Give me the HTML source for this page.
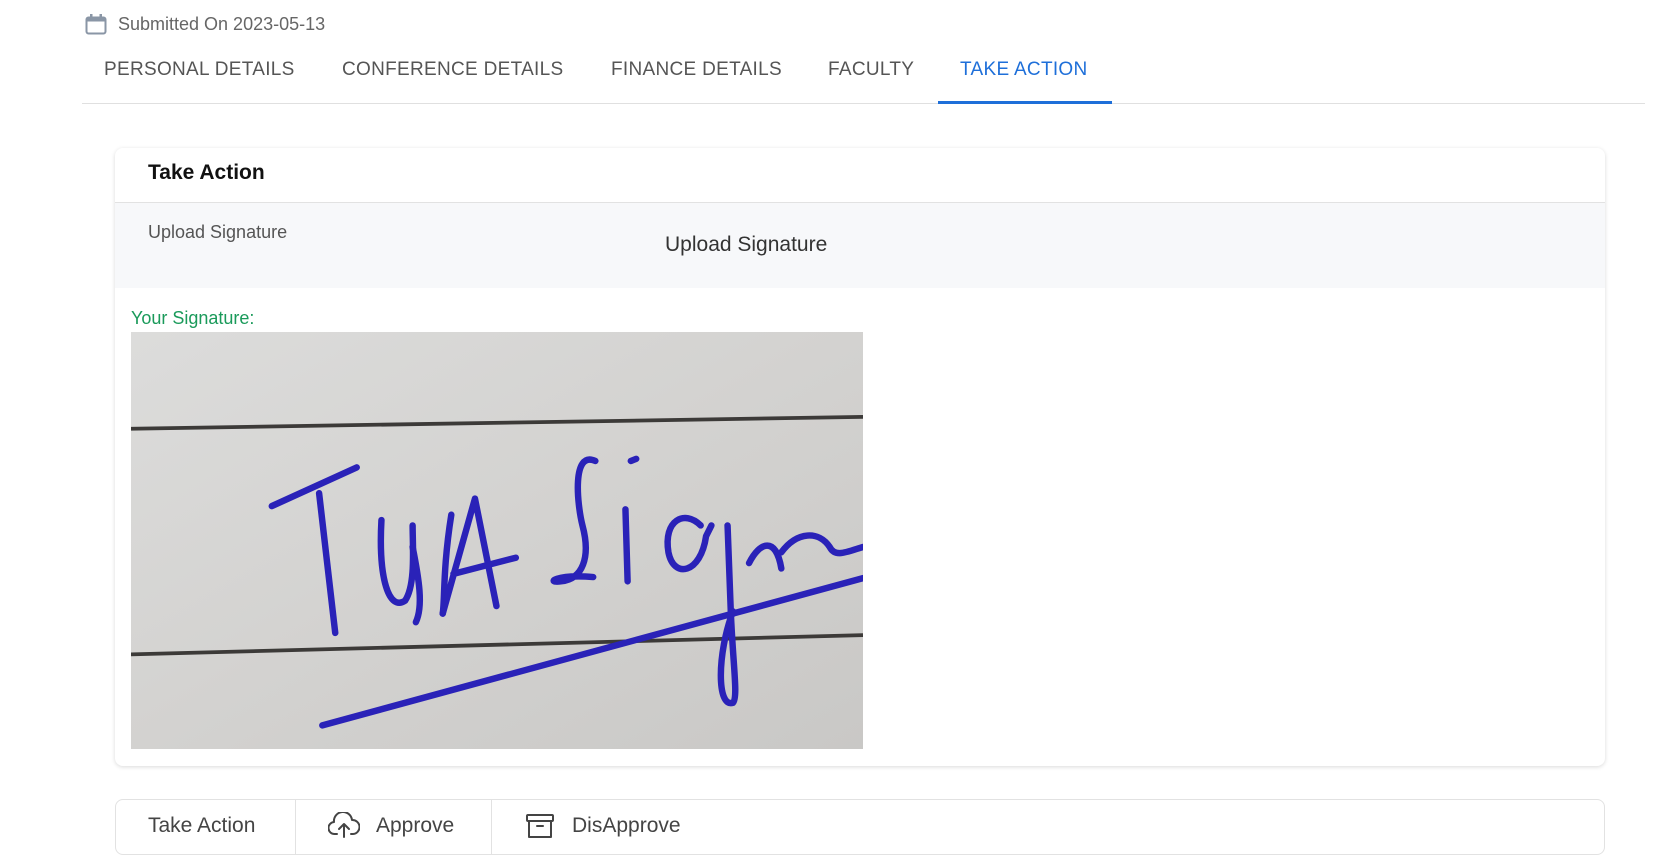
<!DOCTYPE html>
<html><head><meta charset="utf-8"><style>
*{box-sizing:border-box;margin:0;padding:0}
body{width:1678px;height:865px;background:#fff;font-family:"Liberation Sans",sans-serif;position:relative;overflow:hidden;color:#555}
.abs{position:absolute;white-space:nowrap}
.tab{position:absolute;top:59px;font-size:19px;color:#555;letter-spacing:.3px}
</style></head><body>
<svg class="abs" style="left:85px;top:14px" width="22" height="21" viewBox="0 0 22 21"><rect x="1.5" y="3.5" width="19" height="16" rx="2" fill="none" stroke="#8a96a6" stroke-width="2"/><rect x="1.5" y="3.5" width="19" height="4" fill="#8a96a6"/><rect x="5" y="0" width="2.5" height="5" fill="#8a96a6"/><rect x="14.5" y="0" width="2.5" height="5" fill="#8a96a6"/></svg>
<div class="abs" style="left:118px;top:14px;font-size:18px;color:#666">Submitted On 2023-05-13</div>
<div class="tab" style="left:104px">PERSONAL DETAILS</div>
<div class="tab" style="left:342px">CONFERENCE DETAILS</div>
<div class="tab" style="left:611px">FINANCE DETAILS</div>
<div class="tab" style="left:828px">FACULTY</div>
<div class="tab" style="left:960px;color:#1e6fd9">TAKE ACTION</div>
<div class="abs" style="left:82px;top:103px;width:1563px;height:1px;background:#e0e0e0"></div>
<div class="abs" style="left:938px;top:101px;width:174px;height:3px;background:#1e6fd9"></div>

<div class="abs" style="left:115px;top:148px;width:1490px;height:618px;border-radius:8px;box-shadow:0 1px 4px rgba(0,0,0,.15);background:#fff;overflow:hidden">
 <div class="abs" style="left:33px;top:13px;font-size:21px;font-weight:bold;color:#111">Take Action</div>
 <div class="abs" style="left:0;top:54px;width:100%;height:86px;background:#f7f8fa;border-top:1px solid #e2e2e2"></div>
 <div class="abs" style="left:33px;top:74px;font-size:18px;color:#555">Upload Signature</div>
 <div class="abs" style="left:550px;top:85px;font-size:21px;color:#333">Upload Signature</div>
 <div class="abs" style="left:16px;top:160px;font-size:18px;color:#1a9a5a">Your Signature:</div>
</div>
<svg class="abs" style="left:131px;top:332px" width="732" height="417" viewBox="0 0 681 388" preserveAspectRatio="none">
<defs><linearGradient id="g" x1="0" y1="0" x2="1" y2="1"><stop offset="0" stop-color="#dcdcdb"/><stop offset=".5" stop-color="#d3d2d0"/><stop offset="1" stop-color="#c9c8c6"/></linearGradient></defs>
<rect width="681" height="388" fill="url(#g)"/>
<path d="M0 90 L681 79" stroke="#3c3a38" stroke-width="3.5"/>
<path d="M0 300 L681 282" stroke="#3c3a38" stroke-width="3.5"/>
<g fill="none" stroke="#2a22b8" stroke-width="6" stroke-linecap="round" stroke-linejoin="round">
<path d="M131 162 L210 126"/>
<path d="M175 150 L190 280"/>
<path d="M233 175 C230 230 240 260 255 250 C265 235 262 200 262 180"/>
<path d="M262 200 C268 230 272 255 265 270"/>
<path d="M298 170 C290 220 292 250 290 262"/>
<path d="M290 262 L320 155 L340 255 M300 225 L358 210"/>
<path d="M432 120 C410 110 415 160 420 180 C428 210 420 230 400 232 C385 234 395 225 430 228"/>
<path d="M465 120 L470 118"/>
<path d="M460 165 L462 232"/>
<path d="M530 180 C515 165 495 175 500 205 C505 230 530 225 535 190 L540 180"/>
<path d="M555 180 L558 260 C560 310 565 340 560 345 C545 350 545 300 560 260"/>
<path d="M575 215 C585 195 600 190 605 220 M605 205 C620 185 640 185 650 200 C655 210 665 205 681 200"/>
<path d="M178 366 L681 229"/>
</g>
</svg>

<div class="abs" style="left:115px;top:799px;width:1490px;height:56px;border:1px solid #e2e2e2;border-radius:8px;background:#fff"></div>
<div class="abs" style="left:295px;top:800px;width:1px;height:54px;background:#e2e2e2"></div>
<div class="abs" style="left:491px;top:800px;width:1px;height:54px;background:#e2e2e2"></div>
<div class="abs" style="left:148px;top:814px;font-size:21px;color:#444">Take Action</div>
<svg class="abs" style="left:328px;top:812px" width="32" height="28" viewBox="0 0 32 28" fill="none" stroke="#444" stroke-width="2" stroke-linecap="round" stroke-linejoin="round"><path d="M9 22 H7 A6 6 0 0 1 6 10 A9 9 0 0 1 24 8 A6.5 6.5 0 0 1 25 22 H23"/><path d="M16 25 V13 M11 17 L16 12 L21 17"/></svg>
<div class="abs" style="left:376px;top:814px;font-size:21px;color:#444">Approve</div>
<svg class="abs" style="left:525px;top:812px" width="30" height="28" viewBox="0 0 30 28" fill="none" stroke="#444" stroke-width="2" stroke-linejoin="round"><rect x="2" y="3" width="26" height="6" rx="1"/><path d="M4 9 V25 H26 V9"/><path d="M12 14 H18" stroke-linecap="round"/></svg>
<div class="abs" style="left:572px;top:814px;font-size:21px;color:#444">DisApprove</div>
</body></html>
